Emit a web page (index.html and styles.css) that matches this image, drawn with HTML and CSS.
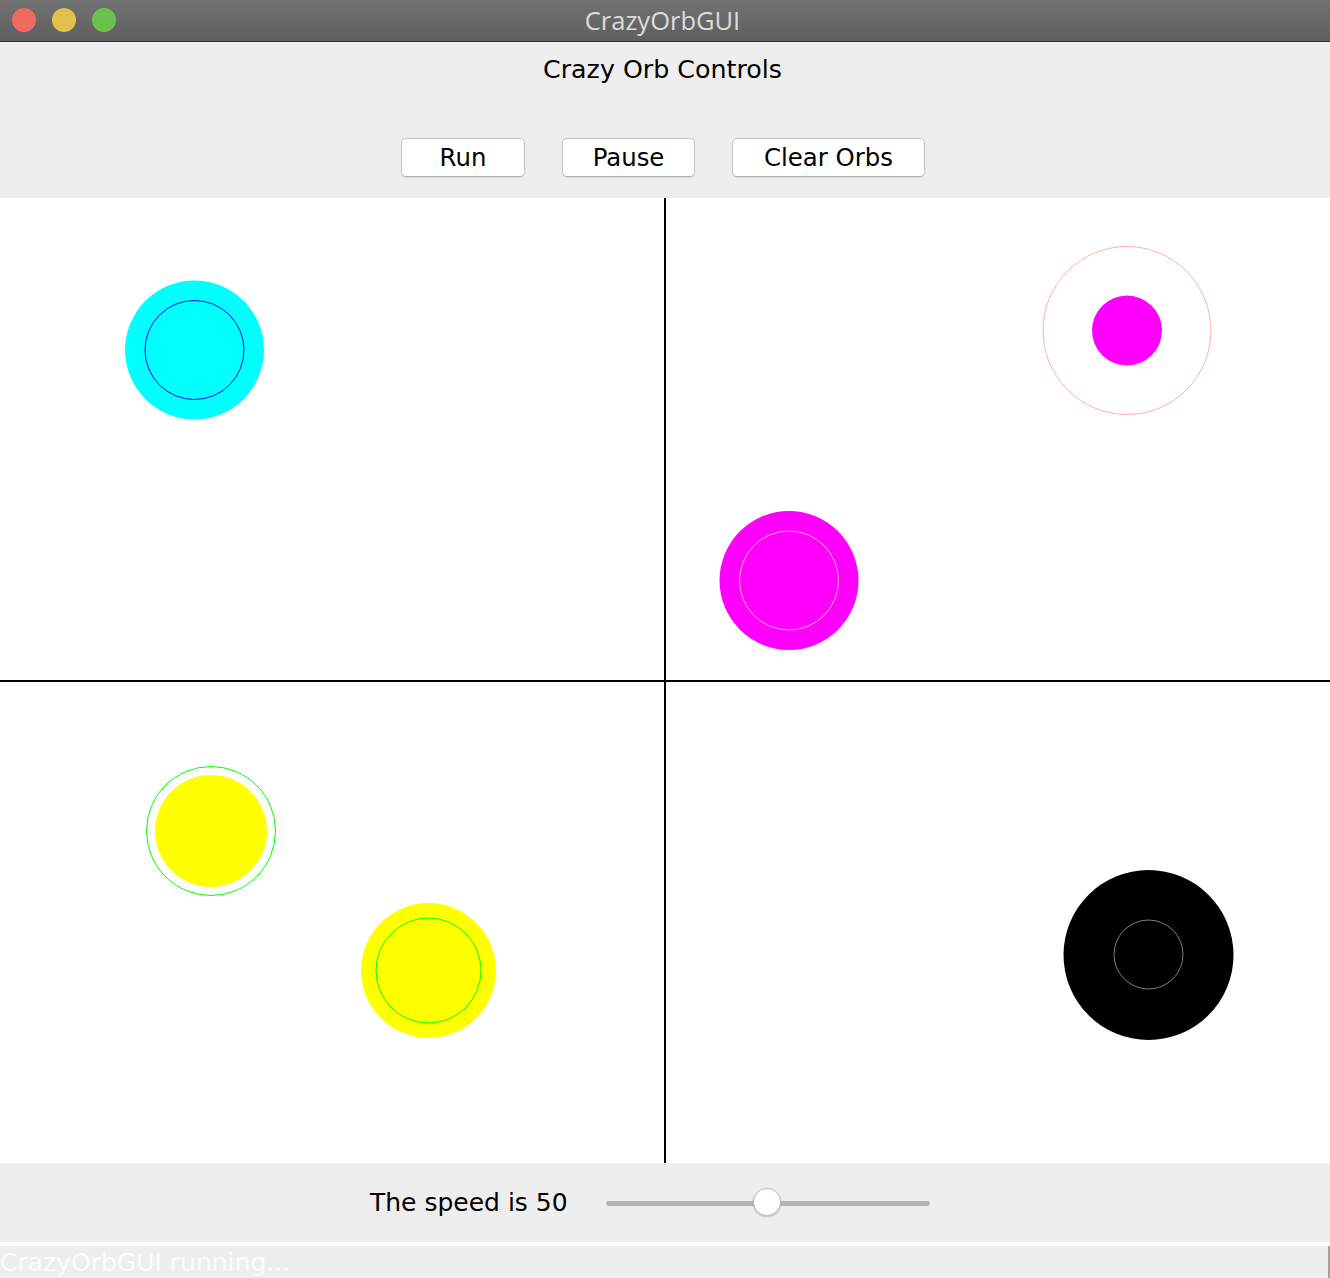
FILE: index.html
```html
<!DOCTYPE html>
<html>
<head>
<meta charset="utf-8">
<link rel="stylesheet" href="styles.css">
</head>
<body>
<div class="window">
  <div class="titlebar">
    <div class="lights">
      <span class="light red"></span>
      <span class="light yellow"></span>
      <span class="light green"></span>
    </div>
    <div class="title">CrazyOrbGUI</div>
  </div>
  <div class="controls">
    <div class="heading">Crazy Orb Controls</div>
    <div class="buttons">
      <button class="btn btn-run">Run</button>
      <button class="btn btn-pause">Pause</button>
      <button class="btn btn-clear">Clear Orbs</button>
    </div>
  </div>
  <div class="canvas">
    <svg class="orbs" width="1330" height="965" viewBox="0 0 1330 965">
      <line x1="665" y1="0" x2="665" y2="965" stroke="#000" stroke-width="2"/>
      <line x1="0" y1="483" x2="1330" y2="483" stroke="#000" stroke-width="2"/>
      <circle cx="194.5" cy="152" r="69.5" fill="#00ffff"/>
      <circle cx="194.5" cy="152" r="49.5" fill="none" stroke="#0000ff" stroke-width="1"/>
      <circle cx="1127" cy="132.5" r="84" fill="none" stroke="#ffafaf" stroke-width="1"/>
      <circle cx="1127" cy="132.5" r="35" fill="#ff00ff"/>
      <circle cx="789" cy="382.5" r="69.5" fill="#ff00ff"/>
      <circle cx="789" cy="382.5" r="49.5" fill="none" stroke="#ffafaf" stroke-width="1"/>
      <circle cx="211" cy="633" r="56" fill="#ffff00"/>
      <circle cx="211" cy="633" r="64.5" fill="none" stroke="#00ff00" stroke-width="1"/>
      <circle cx="428.5" cy="772.5" r="67.5" fill="#ffff00"/>
      <circle cx="428.5" cy="772.5" r="52.5" fill="none" stroke="#00ff00" stroke-width="1"/>
      <circle cx="1148.5" cy="757" r="85" fill="#000000"/>
      <circle cx="1148.5" cy="756.5" r="34.5" fill="none" stroke="#808080" stroke-width="1"/>
    </svg>
  </div>
  <div class="speed">
    <span class="speed-label">The speed is 50</span>
    <div class="slider">
      <div class="track"></div>
      <div class="thumb"></div>
    </div>
  </div>
  <div class="status">
    <span class="status-text">CrazyOrbGUI running...</span>
    <span class="status-edge"></span>
  </div>
</div>
</body>
</html>
```
FILE: styles.css
```css
html, body {
  margin: 0;
  padding: 0;
  background: #eeeeee;
}
body {
  width: 1330px;
  height: 1278px;
  overflow: hidden;
  font-family: "DejaVu Sans", "Open Sans", sans-serif;
}
.window {
  display: flex;
  flex-direction: column;
  width: 1330px;
  height: 1278px;
}
.titlebar {
  position: relative;
  height: 41px;
  flex: none;
  background: linear-gradient(#727272, #5e5e5e);
  border-bottom: 1px solid #2f2f2f;
  display: flex;
  align-items: center;
  justify-content: center;
}
.lights {
  position: absolute;
  left: 12px;
  top: 8px;
  display: flex;
  gap: 16px;
}
.light {
  width: 24px;
  height: 24px;
  border-radius: 50%;
  display: block;
}
.red { background: #ee6a5f; }
.yellow { background: #e2c14c; }
.green { background: #6cc14a; }
.title {
  color: #dcdcdc;
  font-family: "Open Sans", "DejaVu Sans", sans-serif;
  font-size: 25.5px;
  margin-top: -2px;
  margin-left: -5px;
}
.controls {
  height: 156px;
  flex: none;
  background: #eeeeee;
  display: flex;
  flex-direction: column;
  align-items: center;
}
.heading {
  margin-top: 13px;
  font-size: 25.3px;
  color: #000;
  line-height: 30px;
  margin-left: -5px;
}
.buttons {
  margin-top: 53px;
  display: flex;
  gap: 37px;
  margin-left: -4px;
}
.btn {
  height: 39px;
  background: #ffffff;
  border: 1px solid #c4c4c4;
  border-bottom-color: #adadad;
  border-radius: 5px;
  box-shadow: 0 1px 1px rgba(0,0,0,0.08);
  font-family: "DejaVu Sans", "Open Sans", sans-serif;
  font-size: 24.4px;
  color: #000;
  padding: 0;
  line-height: 36px;
}
.btn-run { width: 124px; }
.btn-pause { width: 133px; }
.btn-clear { width: 193px; }
.canvas {
  height: 965px;
  flex: none;
  background: #ffffff;
}
.orbs {
  display: block;
}
.speed {
  height: 79px;
  flex: none;
  background: #eeeeee;
  display: flex;
  align-items: center;
  padding-left: 370px;
  box-sizing: border-box;
}
.speed-label {
  font-size: 25px;
  color: #000;
  margin-top: -1px;
  width: 198px;
  white-space: nowrap;
}
.slider {
  position: relative;
  margin-left: 38px;
  width: 324px;
  height: 30px;
}
.track {
  position: absolute;
  left: 0;
  right: 0;
  top: 13px;
  height: 5px;
  border-radius: 3px;
  background: #b5b5b5;
}
.thumb {
  position: absolute;
  left: 147px;
  top: 0;
  width: 28px;
  height: 28px;
  border-radius: 50%;
  background: #ffffff;
  border: 1px solid #bdbdbd;
  box-shadow: 0 1px 2px rgba(0,0,0,0.2);
  box-sizing: border-box;
}
.status {
  position: relative;
  flex: 1;
  background: #eeeeee;
  border-top: 4px solid #ffffff;
  overflow: hidden;
}
.status-text {
  display: block;
  font-size: 25px;
  color: #fbfbfb;
  line-height: 30px;
  margin-top: 2px;
  white-space: nowrap;
}
.status-edge {
  position: absolute;
  right: 0;
  top: -2px;
  width: 2px;
  bottom: 0;
  background: #a2a2a2;
}
```
